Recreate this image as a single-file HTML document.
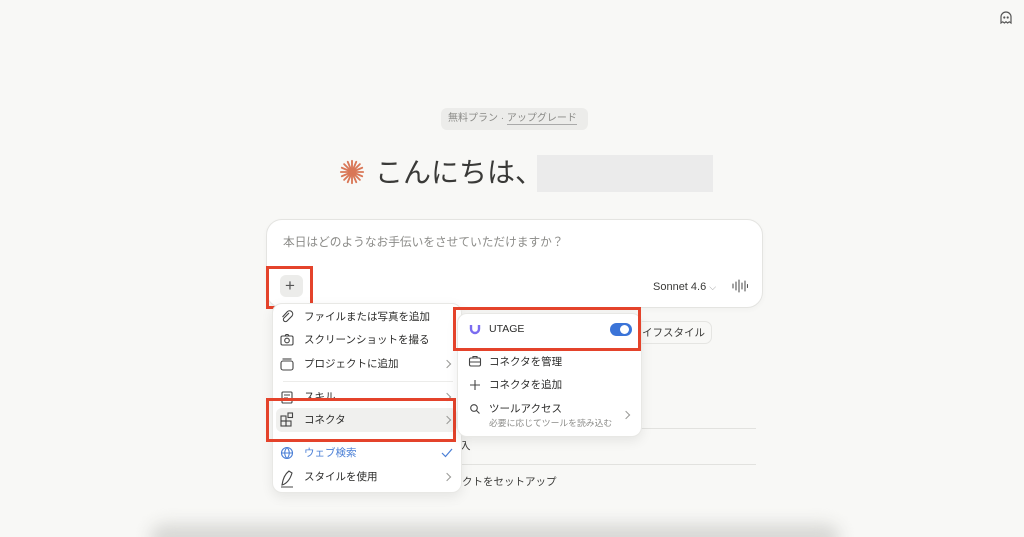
<!DOCTYPE html>
<html><head><meta charset="utf-8"><style>
*{margin:0;padding:0;box-sizing:border-box}
html,body{width:1024px;height:537px;overflow:hidden}
body{background:#f8f8f6;position:relative;font-family:"Liberation Sans","Noto Sans CJK JP",sans-serif;color:#2b2b2a}
.a{position:absolute}
.t{position:absolute;font-size:10.5px;line-height:14px;white-space:nowrap}
.red{position:absolute;border:3px solid #e4432b}
.chev{position:absolute;width:6px;height:6px;border-right:1.2px solid #9a9a97;border-top:1.2px solid #9a9a97;transform:rotate(45deg)}
</style></head><body>
<!-- ghost -->
<svg class="a" style="left:999px;top:11px" width="14" height="14" viewBox="0 0 14 14" fill="none" stroke="#555" stroke-width="1.2"><path d="M2 12V6a5 5 0 0 1 10 0v6l-1.7-1.2L8.6 12 7 10.8 5.4 12 3.7 10.8z"/><circle cx="5.3" cy="6.5" r=".5" fill="#555"/><circle cx="8.7" cy="6.5" r=".5" fill="#555"/></svg>
<!-- badge -->
<div class="a" style="left:441px;top:108px;width:147px;height:22px;background:#ececea;border-radius:6px"></div>
<div class="t" style="left:448px;top:112px;font-size:10px;color:#8a8a87">無料プラン · <span style="border-bottom:1px solid #aaa">アップグレード</span></div>
<!-- heading -->
<svg class="a" style="left:339px;top:159px" width="26" height="26" viewBox="-14 -14 28 28" stroke="#d97757" stroke-width="2" stroke-linecap="round">
<g><line x1="0" y1="-12" x2="0" y2="12"/><line x1="-12" y1="0" x2="12" y2="0"/><line x1="-8.5" y1="-8.5" x2="8.5" y2="8.5"/><line x1="-8.5" y1="8.5" x2="8.5" y2="-8.5"/><line x1="-4.6" y1="-11" x2="4.6" y2="11"/><line x1="4.6" y1="-11" x2="-4.6" y2="11"/><line x1="-11" y1="-4.6" x2="11" y2="4.6"/><line x1="-11" y1="4.6" x2="11" y2="-4.6"/></g></svg>
<div class="t" style="left:375px;top:155px;font-size:28px;line-height:36px;color:#3a3a38">こんにちは、</div>
<div class="a" style="left:537px;top:155px;width:176px;height:37px;background:#ebebeb"></div>
<!-- background items -->
<div class="a" style="left:630px;top:321px;width:82px;height:23px;border:1px solid #e5e5e2;border-radius:7px;background:#f8f8f6"></div>
<div class="t" style="left:642px;top:326px;color:#3a3a38">イフスタイル</div>
<div class="a" style="left:455px;top:428px;width:301px;height:1px;background:#e2e2df"></div>
<div class="a" style="left:455px;top:464px;width:301px;height:1px;background:#e2e2df"></div>
<div class="t" style="left:460px;top:439px;color:#3a3a38">入</div>
<div class="t" style="left:462px;top:475px;color:#3a3a38">クトをセットアップ</div>
<!-- input card -->
<div class="a" style="left:266px;top:219px;width:497px;height:89px;background:#fff;border:1px solid #e4e4e1;border-radius:16px;box-shadow:0 2px 6px rgba(0,0,0,.03)"></div>
<div class="t" style="left:283px;top:236px;font-size:11.7px;color:#8b8b88">本日はどのようなお手伝いをさせていただけますか？</div>
<div class="a" style="left:280px;top:275px;width:23px;height:22px;background:#ececea;border-radius:6px"></div>
<div class="t" style="left:285px;top:276px;font-size:17px;line-height:20px;color:#555">+</div>
<div class="red" style="left:266px;top:266px;width:47px;height:43px"></div>
<div class="t" style="left:653px;top:280px;font-size:11px;color:#3a3a38">Sonnet 4.6 <span style="color:#999;font-size:9px">⌵</span></div>
<svg class="a" style="left:732px;top:279px" width="16" height="14" viewBox="0 0 16 14" stroke="#555" stroke-width="1.1" stroke-linecap="round"><path d="M1 5v4M4 3v8M7 1v12M10 4v6M13 2v10M15.5 5.5v3"/></svg>
<!-- left menu -->
<div class="a" style="left:272px;top:303px;width:190px;height:190px;background:#fff;border:1px solid #e8e8e5;border-radius:10px;box-shadow:0 4px 12px rgba(0,0,0,.08)"></div>
<div class="a" style="left:276px;top:408px;width:181px;height:24px;background:#f0f0ee;border-radius:6px"></div>
<svg class="a" style="left:279px;top:309px" width="16" height="180" viewBox="0 0 16 180" fill="none" stroke="#444" stroke-width="1.1">
<path d="M10 4l-5 5a2 2 0 0 0 3 3l5-5a3.2 3.2 0 0 0-4.5-4.5L3.5 8"/>
<rect x="2" y="27" width="12" height="9" rx="1.5"/><circle cx="8" cy="31.5" r="2.3"/><path d="M6 27l1-1.5h2L10 27"/>
<rect x="2" y="52" width="12" height="9" rx="2"/><path d="M3.5 50h9"/>
<rect x="3" y="83" width="10" height="11" rx="1"/><path d="M5 86h6M5 89h4"/>
<rect x="2" y="107" width="5" height="5"/><rect x="2" y="112" width="5" height="5"/><rect x="7" y="112" width="5" height="5"/><rect x="9" y="104" width="4.5" height="4.5"/>
<g stroke="#4a7fd6"><circle cx="8" cy="144" r="5.5"/><path d="M2.5 144h11M8 138.5c-3 3-3 8 0 11M8 138.5c3 3 3 8 0 11"/></g>
<path d="M3 176c4-1 8-5 10-12l-3-2c-4 3-6 7-7 14zM2 178h12"/>
</svg>
<div class="t" style="left:304px;top:310px">ファイルまたは写真を追加</div>
<div class="t" style="left:304px;top:333px">スクリーンショットを撮る</div>
<div class="t" style="left:304px;top:357px">プロジェクトに追加</div>
<div class="chev" style="left:444px;top:361px"></div>
<div class="a" style="left:283px;top:381px;width:170px;height:1px;background:#ececea"></div>
<div class="t" style="left:304px;top:390px">スキル</div>
<div class="chev" style="left:444px;top:394px"></div>
<div class="t" style="left:304px;top:413px">コネクタ</div>
<div class="chev" style="left:444px;top:417px"></div>
<div class="t" style="left:304px;top:446px;color:#4a7fd6">ウェブ検索</div>
<svg class="a" style="left:441px;top:448px" width="12" height="10" viewBox="0 0 12 10" fill="none" stroke="#4a7fd6" stroke-width="1.2"><path d="M1 5l3.5 3.5L11 1"/></svg>
<div class="t" style="left:304px;top:470px">スタイルを使用</div>
<div class="chev" style="left:444px;top:474px"></div>
<div class="red" style="left:266px;top:398px;width:190px;height:44px"></div>
<!-- submenu -->
<div class="a" style="left:457px;top:313px;width:185px;height:124px;background:#fff;border:1px solid #e8e8e5;border-radius:10px;box-shadow:0 4px 12px rgba(0,0,0,.08)"></div>
<svg class="a" style="left:469px;top:323px" width="12" height="12" viewBox="0 0 12 12"><path d="M2 2v4a4 4 0 0 0 8 0V2" fill="none" stroke="#7b6cf0" stroke-width="2.4"/></svg>
<div class="t" style="left:489px;top:322px;font-size:10.5px">UTAGE</div>
<div class="a" style="left:610px;top:323px;width:22px;height:13px;background:#3b74d8;border-radius:7px"></div>
<div class="a" style="left:620px;top:325px;width:9px;height:9px;background:#fff;border-radius:50%"></div>
<div class="red" style="left:453px;top:307px;width:188px;height:44px"></div>
<svg class="a" style="left:468px;top:355px" width="14" height="64" viewBox="0 0 14 64" fill="none" stroke="#444" stroke-width="1.1">
<rect x="1.5" y="3" width="11" height="8" rx="1.5"/><path d="M5 3V1.5h4V3M1.5 7h11"/>
<path d="M7 25v10M2 30h10"/>
<circle cx="6" cy="53" r="3.3"/><path d="M8.5 55.5l3 3"/></svg>
<div class="t" style="left:489px;top:355px">コネクタを管理</div>
<div class="t" style="left:489px;top:378px">コネクタを追加</div>
<div class="t" style="left:489px;top:402px">ツールアクセス</div>
<div class="t" style="left:489px;top:416px;font-size:8.8px;color:#8b8b88">必要に応じてツールを読み込む</div>
<div class="chev" style="left:623px;top:412px"></div>
<!-- bottom shadow -->
<div class="a" style="left:150px;top:524px;width:690px;height:30px;background:#d8d8d5;border-radius:20px;filter:blur(8px)"></div>
</body></html>
